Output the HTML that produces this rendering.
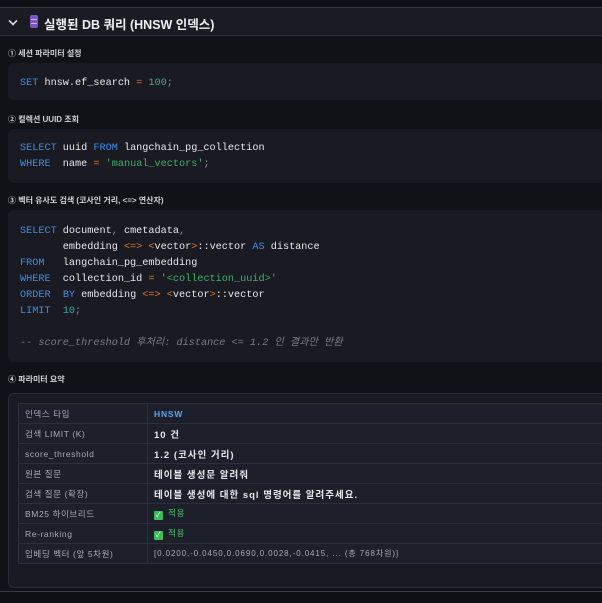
<!DOCTYPE html>
<html><head><meta charset="utf-8"><style>
*{margin:0;padding:0;box-sizing:border-box}
body{width:602px;height:603px;overflow:hidden;background:#0e1015;font-family:"Liberation Sans","Noto Sans CJK KR",sans-serif;color:#e6e6ea;position:relative}
.exp{position:absolute;left:0;top:7px;width:620px;height:585px;border-top:1px solid #3a3b40;border-bottom:1px solid #3a3b40;background:#111217}
.hdr{position:absolute;left:0;top:0;width:100%;height:28px;background:#1b1c23;border-bottom:1px solid #33343a}
.hdr .t{position:absolute;left:44px;top:6px;font-size:12.5px;font-weight:bold;color:#f0f0f4}
.chev{position:absolute;left:9px;top:9px;width:8px;height:8px;border-right:2px solid #ddd;border-bottom:2px solid #ddd;transform:rotate(45deg) scale(.8)}
.ico{position:absolute;left:30px;top:7px;width:8px;height:13px;background:#7b55c7;border-radius:2px}
.ico:before,.ico:after{content:"";position:absolute;left:1px;width:6px;height:1px;background:#c9b5f2}
.ico:before{top:4px}.ico:after{top:8px}
.lbl{position:absolute;left:8px;font-size:8px;font-weight:bold;color:#d0d0d6}
.code{position:absolute;left:8px;width:620px;background:#1a1b22;border-radius:6px;font-family:"Liberation Mono","Noto Sans CJK KR",monospace;font-size:10.2px;line-height:16px;color:#e8e8ec;white-space:pre;padding-left:12px}
.k{color:#3d8ee8}.s{color:#3fb06a}.n{color:#3aa9a0}.o{color:#e0772a}.c{color:#7a7d86;font-style:italic}.p{color:#8a8d96}
.box{position:absolute;left:8px;top:393px;width:620px;height:195px;background:#1a1b22;border:1px solid #2a2c35;border-radius:6px}
table{position:absolute;left:9px;top:9px;width:620px;border-collapse:collapse;font-size:8.5px}
td{height:20px;border:1px solid #2c2f3a;background:#1d1f2a;padding:0 6px;color:#e8e8ec;letter-spacing:.8px}
td:first-child{width:129px;color:#a9abb4;letter-spacing:.6px}
td.v{font-size:9.5px;font-weight:bold;letter-spacing:1px}
.chk{display:inline-block;width:9px;height:9px;background:#3dbb5a;border-radius:1px;vertical-align:-1px;margin-right:5px;color:#fff;font-size:7px;line-height:9px;text-align:center}
.g{color:#4ec46a}
</style></head><body>
<div class="exp">
 <div class="hdr"><div class="chev"></div><div class="ico"></div><div class="t">실행된 DB 쿼리 (HNSW 인덱스)</div></div>
</div>
<div class="lbl" style="top:48px">① 세션 파라미터 설정</div>
<div class="code" style="top:63px;height:37px;padding-top:13px"><span class="k">SET</span> hnsw.ef_search <span class="o">=</span> <span class="n">100</span><span class="p">;</span></div>
<div class="lbl" style="top:114px">② 컬렉션 UUID 조회</div>
<div class="code" style="top:129px;height:54px;padding-top:12px"><span class="k">SELECT</span> uuid <span class="k">FROM</span> langchain_pg_collection
<span class="k">WHERE</span>  name <span class="o">=</span> <span class="s">'manual_vectors'</span><span class="p">;</span></div>
<div class="lbl" style="top:195px">③ 벡터 유사도 검색 (코사인 거리, &lt;=&gt; 연산자)</div>
<div class="code" style="top:210px;height:152px;padding-top:14px"><span class="k">SELECT</span> document<span class="p">,</span> cmetadata<span class="p">,</span>
       embedding <span class="o">&lt;=&gt;</span> <span class="o">&lt;</span>vector<span class="o">&gt;</span>::vector <span class="k">AS</span> distance
<span class="k">FROM</span>   langchain_pg_embedding
<span class="k">WHERE</span>  collection_id <span class="o">=</span> <span class="s">'&lt;collection_uuid&gt;'</span>
<span class="k">ORDER</span>  <span class="k">BY</span> embedding <span class="o">&lt;=&gt;</span> <span class="o">&lt;</span>vector<span class="o">&gt;</span>::vector
<span class="k">LIMIT</span>  <span class="n">10</span><span class="p">;</span>

<span class="c">-- score_threshold 후처리: distance &lt;= 1.2 인 결과만 반환</span></div>
<div class="lbl" style="top:374px">④ 파라미터 요약</div>
<div class="box"><table>
<tr><td>인덱스 타입</td><td style="color:#5aa9f0;font-weight:bold">HNSW</td></tr>
<tr><td>검색 LIMIT (K)</td><td class="v">10 건</td></tr>
<tr><td>score_threshold</td><td class="v">1.2 (코사인 거리)</td></tr>
<tr><td>원본 질문</td><td class="v">테이블 생성문 알려줘</td></tr>
<tr><td>검색 질문 (확장)</td><td class="v">테이블 생성에 대한 sql 명령어를 알려주세요.</td></tr>
<tr><td>BM25 하이브리드</td><td><span class="chk">✓</span><span class="g">적용</span></td></tr>
<tr><td>Re-ranking</td><td><span class="chk">✓</span><span class="g">적용</span></td></tr>
<tr><td>임베딩 벡터 (앞 5차원)</td><td style="color:#a9abb4;font-size:8px;letter-spacing:.9px">[0.0200,-0.0450,0.0690,0.0028,-0.0415, ... (총 768차원)]</td></tr>
</table></div>
</body></html>
